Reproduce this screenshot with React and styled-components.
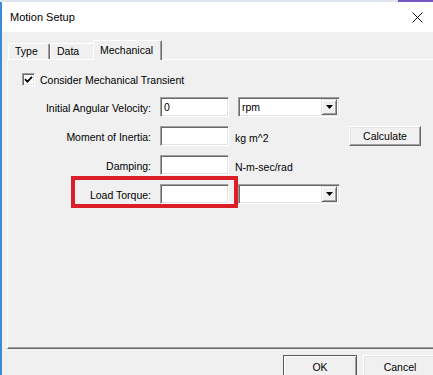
import React from "react";
import styled, { createGlobalStyle } from "styled-components";

const Global = createGlobalStyle`
  html, body { margin: 0; padding: 0; background: #f0f0f0; }
  body { font-family: "Liberation Sans", Arial, sans-serif; }
`;

const Screen = styled.div`
  width: 433px;
  height: 375px;
  overflow: hidden;
  display: flex;
  flex-direction: column;
  background: #f0f0f0;
`;

const TopEdge = styled.div`
  height: 2px;
  display: flex;
  flex-shrink: 0;
`;

const EdgeSeg = styled.div`
  height: 100%;
  flex: ${(p) => (p.$w ? `0 0 ${p.$w}px` : "1")};
  background: ${(p) => p.$c};
`;

const Frame = styled.div`
  flex: 1;
  display: flex;
  border-left: 2px solid #3d8bd6;
  min-height: 0;
`;

const Dialog = styled.div`
  flex: 1;
  display: flex;
  flex-direction: column;
  min-width: 0;
`;

const TitleBar = styled.div`
  height: 30px;
  flex-shrink: 0;
  background: #ffffff;
  display: flex;
  align-items: center;
  justify-content: space-between;
  padding: 0 10px 0 8px;
`;

const Title = styled.span`
  font-size: 11px;
  color: #000;
`;

const Body = styled.div`
  flex: 1;
  background: #f0f0f0;
  padding: 8px 0 0 5px;
  overflow: hidden;
  display: flex;
  flex-direction: column;
`;

const TabStrip = styled.div`
  height: 19px;
  display: flex;
  align-items: flex-end;
  padding-left: 1px;
  flex-shrink: 0;
`;

const Tab = styled.div`
  box-sizing: border-box;
  width: ${(p) => p.$w}px;
  height: ${(p) => (p.$active ? 20 : 16)}px;
  margin: ${(p) => (p.$active ? "0 0 -1px -2px" : "0")};
  padding: ${(p) => (p.$active ? "0 0 2px 6px" : "0 0 1px 6px")};
  display: flex;
  align-items: center;
  font-size: 10.5px;
  color: #000;
  background: #f0f0f0;
  border-top: 1px solid #ffffff;
  border-left: 1px solid #ffffff;
  border-right: 1px solid #696969;
  box-shadow: inset -1px 0 0 #a0a0a0;
  border-radius: 2px 2px 0 0;
  position: relative;
  z-index: ${(p) => (p.$active ? 2 : 0)};
`;

const Panel = styled.div`
  box-sizing: border-box;
  height: 290px;
  flex-shrink: 0;
  margin-right: -12px;
  border-top: 1px solid #ffffff;
  border-left: 1px solid #ffffff;
  border-bottom: 1px solid #696969;
  box-shadow: inset 0 -1px 0 #a0a0a0;
  padding: 13px 0 0 14px;
  display: flex;
  flex-direction: column;
`;

const CheckRow = styled.label`
  display: flex;
  align-items: center;
  gap: 5px;
  height: 13px;
  font-size: 10.5px;
  color: #000;
`;

const CheckBox = styled.span`
  box-sizing: border-box;
  width: 13px;
  height: 13px;
  background: #fff;
  border-top: 1px solid #a0a0a0;
  border-left: 1px solid #a0a0a0;
  border-right: 1px solid #fff;
  border-bottom: 1px solid #fff;
  box-shadow: inset 1px 1px 0 #696969, inset -1px -1px 0 #e3e3e3;
  display: flex;
  align-items: center;
  justify-content: center;
`;

const Form = styled.div`
  margin-top: 11px;
  display: flex;
  flex-direction: column;
  gap: 9px;
`;

const Row = styled.div`
  position: relative;
  display: grid;
  grid-template-columns: 129px 69px 102px 72px;
  column-gap: 9px;
  height: 20px;
  align-items: center;
`;

const Label = styled.span`
  text-align: right;
  font-size: 10.5px;
  color: #000;
  padding-top: 1px;
`;

const Unit = styled.span`
  font-size: 10.5px;
  color: #000;
  margin-left: -3px;
  padding-top: 3px;
`;

const sunken = `
  box-sizing: border-box;
  height: 20px;
  background: #fff;
  border-top: 1px solid #a0a0a0;
  border-left: 1px solid #a0a0a0;
  border-right: 1px solid #fff;
  border-bottom: 1px solid #fff;
  box-shadow: inset 1px 1px 0 #696969, inset -1px -1px 0 #e3e3e3;
`;

const TextBox = styled.div`
  ${sunken}
  font-size: 10.5px;
  color: #000;
  padding: 3px 0 0 3px;
`;

const Select = styled.div`
  ${sunken}
  display: flex;
  align-items: center;
  padding: 2px 2px 2px 2px;
  font-size: 10.5px;
  color: #000;
`;

const SelectText = styled.span`
  flex: 1;
  padding-left: 1px;
`;

const DropButton = styled.span`
  box-sizing: border-box;
  width: 16px;
  height: 16px;
  background: #f0f0f0;
  border-top: 1px solid #e3e3e3;
  border-left: 1px solid #e3e3e3;
  border-right: 1px solid #696969;
  border-bottom: 1px solid #696969;
  box-shadow: inset 1px 1px 0 #fff, inset -1px -1px 0 #a0a0a0;
  display: flex;
  align-items: center;
  justify-content: center;
`;

const raised = `
  box-sizing: border-box;
  background: #f0f0f0;
  border-top: 1px solid #fff;
  border-left: 1px solid #fff;
  border-right: 1px solid #696969;
  border-bottom: 1px solid #696969;
  box-shadow: inset -1px -1px 0 #a0a0a0, inset 1px 1px 0 #e3e3e3;
  font-family: "Liberation Sans", Arial, sans-serif;
  font-size: 10.5px;
  color: #000;
  display: flex;
  align-items: center;
  justify-content: center;
  padding: 0;
`;

const Button = styled.button`
  ${raised}
  height: 20px;
  width: 72px;
`;

const Highlight = styled.div`
  position: absolute;
  left: 49px;
  top: -8px;
  width: 167px;
  height: 32px;
  box-sizing: border-box;
  border: 4px solid #dc1e28;
  pointer-events: none;
`;

const ButtonRow = styled.div`
  display: flex;
  justify-content: flex-end;
  gap: 6px;
  margin-top: 6px;
  margin-right: -4px;
`;

const DialogButton = styled.button`
  ${raised}
  width: 74px;
  height: 23px;
  ${(p) =>
    p.$default &&
    `
    border: 1px solid #5a5a5a;
    box-shadow: inset 1px 1px 0 #fff, inset -1px -1px 0 #a0a0a0;
  `}
`;

const Arrow = () => (
  <svg width="7" height="4" viewBox="0 0 7 4">
    <path d="M0 0H7L3.5 4Z" fill="#000" />
  </svg>
);

const Check = () => (
  <svg width="9" height="9" viewBox="0 0 9 9">
    <path d="M1 4.2L3.4 6.6L8 1.8" stroke="#000" strokeWidth="1.8" fill="none" />
  </svg>
);

const CloseIcon = () => (
  <svg width="11" height="11" viewBox="0 0 11 11">
    <path d="M0.5 0.5L10.5 10.5M10.5 0.5L0.5 10.5" stroke="#111" strokeWidth="1" />
  </svg>
);

export default function App() {
  return (
    <Screen>
      <Global />
      <TopEdge>
        <EdgeSeg $c="#dfe5ec" />
        <EdgeSeg $c="#7657c4" $w={35} />
      </TopEdge>
      <Frame>
        <Dialog>
          <TitleBar>
            <Title>Motion Setup</Title>
            <CloseIcon />
          </TitleBar>
          <Body>
            <TabStrip>
              <Tab $w={42}>Type</Tab>
              <Tab $w={45}>Data</Tab>
              <Tab $w={69} $active>
                Mechanical
              </Tab>
            </TabStrip>
            <Panel>
              <CheckRow>
                <CheckBox>
                  <Check />
                </CheckBox>
                Consider Mechanical Transient
              </CheckRow>
              <Form>
                <Row>
                  <Label>Initial Angular Velocity:</Label>
                  <TextBox>0</TextBox>
                  <Select>
                    <SelectText>rpm</SelectText>
                    <DropButton>
                      <Arrow />
                    </DropButton>
                  </Select>
                </Row>
                <Row>
                  <Label>Moment of Inertia:</Label>
                  <TextBox />
                  <Unit>kg m^2</Unit>
                  <Button>Calculate</Button>
                </Row>
                <Row>
                  <Label>Damping:</Label>
                  <TextBox />
                  <Unit>N-m-sec/rad</Unit>
                </Row>
                <Row>
                  <Label>Load Torque:</Label>
                  <TextBox />
                  <Select>
                    <SelectText />
                    <DropButton>
                      <Arrow />
                    </DropButton>
                  </Select>
                  <Highlight />
                </Row>
              </Form>
            </Panel>
            <ButtonRow>
              <DialogButton $default>OK</DialogButton>
              <DialogButton>Cancel</DialogButton>
            </ButtonRow>
          </Body>
        </Dialog>
      </Frame>
    </Screen>
  );
}
